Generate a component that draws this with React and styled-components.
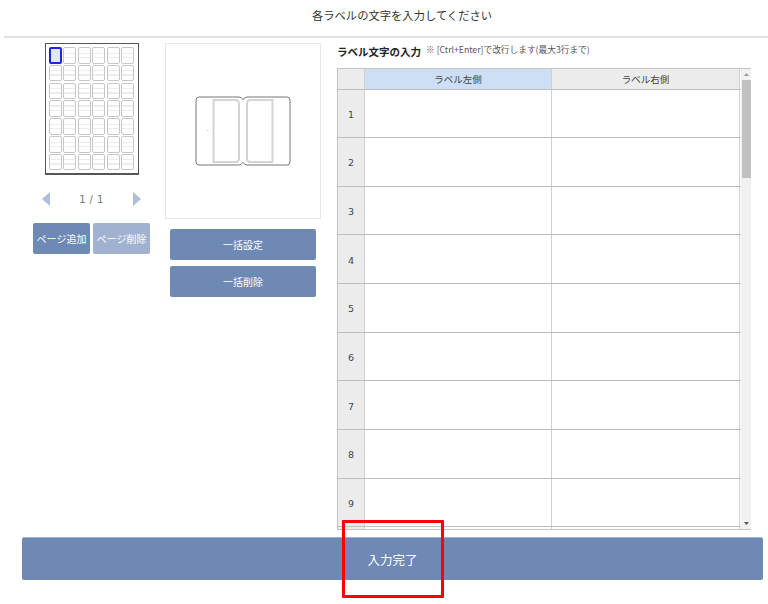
import React from "react";
import styled, { createGlobalStyle } from "styled-components";

const GlobalStyle = createGlobalStyle`
  html, body {
    margin: 0;
    padding: 0;
    background: #fff;
  }
  body {
    font-family: "Noto Sans CJK JP", "Noto Sans", sans-serif;
    color: #333;
  }
  * { box-sizing: border-box; }
`;

const Page = styled.div`
  position: relative;
  width: 768px;
  height: 604px;
  overflow: hidden;
`;

const Header = styled.header`
  height: 38px;
  margin-left: 4px;
  padding-left: 32px;
  border-bottom: 2px solid #e2e2e2;
  text-align: center;
  font-size: 11.3px;
  line-height: 31px;
  color: #333;
`;

const Main = styled.main`
  display: flex;
  height: 492px;
  padding: 5px 0 0 33px;
`;

const LeftCol = styled.section`
  width: 117px;
  margin-right: 15px;
  display: flex;
  flex-direction: column;
  align-items: center;
`;

const Sheet = styled.div`
  width: 94px;
  height: 132px;
  padding: 3px;
  border: 1px solid #555;
  border-bottom-width: 2px;
  display: grid;
  grid-template-columns: repeat(6, 13px);
  grid-auto-rows: 16.6px;
  column-gap: 1.6px;
  row-gap: 1.2px;
`;

const SheetCell = styled.div`
  border-radius: 2px;
  border: ${(p) => (p.$active ? "2px solid #2323e6" : "1.5px solid #c6c6c6")};
  background: ${(p) =>
    p.$active
      ? "#dfeaf8"
      : "linear-gradient(#fff 30%, #ececec 30%, #ececec 38%, #fff 38%, #fff 60%, #ececec 60%, #ececec 68%, #fff 68%)"};
`;

const Pager = styled.div`
  width: 100%;
  margin-top: 16px;
  padding: 0 9px;
  height: 16px;
  display: flex;
  align-items: center;
  justify-content: space-between;
`;

const PagerText = styled.span`
  font-family: "DejaVu Sans", sans-serif;
  font-size: 10px;
  letter-spacing: 0.4px;
  color: #777;
`;

const PageButtons = styled.div`
  width: 100%;
  margin-top: 16px;
  display: flex;
  gap: 3px;
`;

const Button = styled.button`
  display: block;
  border: 0;
  padding: 0;
  color: #fff;
  font-family: inherit;
  background: ${(p) => (p.$muted ? "#a0b2cf" : "#6d89b4")};
  border-radius: 2px;
  font-size: ${(p) => (p.$large ? "12.5px" : "10px")};
  white-space: nowrap;
`;

const PageButton = styled(Button)`
  width: 57px;
  height: 31px;
`;

const MiddleCol = styled.section`
  width: 156px;
  margin-right: 16px;
  display: flex;
  flex-direction: column;
  align-items: center;
`;

const Preview = styled.div`
  width: 100%;
  height: 176px;
  border: 1px solid #e8e8e8;
  display: flex;
  align-items: center;
  justify-content: center;
`;

const BulkButton = styled(Button)`
  width: 146px;
  height: 31px;
  margin-top: 10px;

  & + & {
    margin-top: 6px;
  }
`;

const RightCol = styled.section`
  width: 414px;
`;

const TitleRow = styled.div`
  height: 25px;
  display: flex;
  align-items: flex-start;
`;

const Title = styled.h2`
  margin: 0;
  font-size: 10.5px;
  line-height: 17px;
  font-weight: 700;
  color: #222;
`;

const Note = styled.span`
  margin-left: 5px;
  font-size: 8.7px;
  line-height: 14px;
  color: #555;
`;

const GridFrame = styled.div`
  display: flex;
  height: 462px;
  border: 1px solid #c4c4c4;
  border-right: 0;
  overflow: hidden;
`;

const GridBody = styled.div`
  width: 403px;
  flex: none;
`;

const Row = styled.div`
  display: grid;
  grid-template-columns: 27px 187px 188px;
  height: ${(p) => (p.$head ? "20.5px" : "48.65px")};
  border-bottom: 1px solid #bdbdbd;
`;

const Cell = styled.div`
  display: flex;
  align-items: center;
  justify-content: center;
  padding-top: ${(p) => (p.$head ? "0" : "2px")};
  border-right: 1px solid #d0d0d0;
  font-size: 9.5px;
  font-family: ${(p) => (p.$head ? "inherit" : '"DejaVu Sans", sans-serif')};
  color: #444;
  background: ${(p) => p.$bg || "#fff"};
`;

const Scrollbar = styled.div`
  width: 11px;
  flex: none;
  background: #f1f1f1;
  border-right: 1px solid #ddd;
  display: flex;
  flex-direction: column;
  align-items: center;
`;

const ScrollArrow = styled.div`
  height: 11px;
  width: 100%;
  display: flex;
  align-items: center;
  justify-content: center;
`;

const ScrollThumb = styled.div`
  width: 9px;
  height: 98px;
  background: #c1c1c1;
`;

const ScrollSpacer = styled.div`
  flex: 1;
`;

const Footer = styled.div`
  padding: 7px 5px 0 22px;
`;

const DoneButton = styled(Button)`
  width: 741px;
  height: 43px;
  border-top: 1px solid #9fb2cf;
`;

const Callout = styled.div`
  position: absolute;
  left: 341.5px;
  top: 520px;
  width: 102px;
  height: 78px;
  border: 3px solid #f00;
  border-radius: 1px;
  pointer-events: none;
`;

const Triangle = ({ left }) => (
  <svg width="8" height="14" viewBox="0 0 8 14">
    <path d={left ? "M8 0V14L0 7Z" : "M0 0V14L8 7Z"} fill="#aebfd8" />
  </svg>
);

const LabelPreview = () => (
  <svg width="96" height="70" viewBox="0 0 96 70" fill="none">
    <path d="M18.5 4H40.5Q44 4 44 7.5V62.5Q44 66 40.5 66H18.5Z" stroke="#d4d4d4" strokeWidth="2" />
    <path d="M77.5 4H55.5Q52 4 52 7.5V62.5Q52 66 55.5 66H77.5Z" stroke="#d4d4d4" strokeWidth="2" />
    <path
      d="M4 1H44Q46 1 48 3.5Q50 1 52 1H92Q95 1 95 4V66Q95 69 92 69H52Q50 69 48 66.5Q46 69 44 69H4Q1 69 1 66V4Q1 1 4 1Z"
      stroke="#777"
      strokeWidth="1"
    />
    <path d="M12 34.5h1.5" stroke="#ccc" strokeWidth="1" />
  </svg>
);

const sheetCells = Array.from({ length: 42 }, (_, i) => i);
const rows = [1, 2, 3, 4, 5, 6, 7, 8, 9, ""];

export default function App() {
  return (
    <Page>
      <GlobalStyle />
      <Header>各ラベルの文字を入力してください</Header>
      <Main>
        <LeftCol>
          <Sheet>
            {sheetCells.map((i) => (
              <SheetCell key={i} $active={i === 0} />
            ))}
          </Sheet>
          <Pager>
            <Triangle left />
            <PagerText>1 / 1</PagerText>
            <Triangle />
          </Pager>
          <PageButtons>
            <PageButton>ページ追加</PageButton>
            <PageButton $muted>ページ削除</PageButton>
          </PageButtons>
        </LeftCol>
        <MiddleCol>
          <Preview>
            <LabelPreview />
          </Preview>
          <BulkButton>一括設定</BulkButton>
          <BulkButton>一括削除</BulkButton>
        </MiddleCol>
        <RightCol>
          <TitleRow>
            <Title>ラベル文字の入力</Title>
            <Note>※ [Ctrl+Enter]で改行します(最大3行まで)</Note>
          </TitleRow>
          <GridFrame>
            <GridBody>
              <Row $head>
                <Cell $head $bg="#ececec" />
                <Cell $head $bg="#cddff5">ラベル左側</Cell>
                <Cell $head $bg="#ececec">ラベル右側</Cell>
              </Row>
              {rows.map((n, i) => (
                <Row key={i}>
                  <Cell $bg="#ececec">{n}</Cell>
                  <Cell />
                  <Cell />
                </Row>
              ))}
            </GridBody>
            <Scrollbar>
              <ScrollArrow>
                <svg width="5" height="3" viewBox="0 0 5 3">
                  <path d="M2.5 0L5 3H0Z" fill="#999" />
                </svg>
              </ScrollArrow>
              <ScrollThumb />
              <ScrollSpacer />
              <ScrollArrow>
                <svg width="5" height="3" viewBox="0 0 5 3">
                  <path d="M0 0H5L2.5 3Z" fill="#555" />
                </svg>
              </ScrollArrow>
            </Scrollbar>
          </GridFrame>
        </RightCol>
      </Main>
      <Footer>
        <DoneButton $large>入力完了</DoneButton>
      </Footer>
      <Callout />
    </Page>
  );
}
